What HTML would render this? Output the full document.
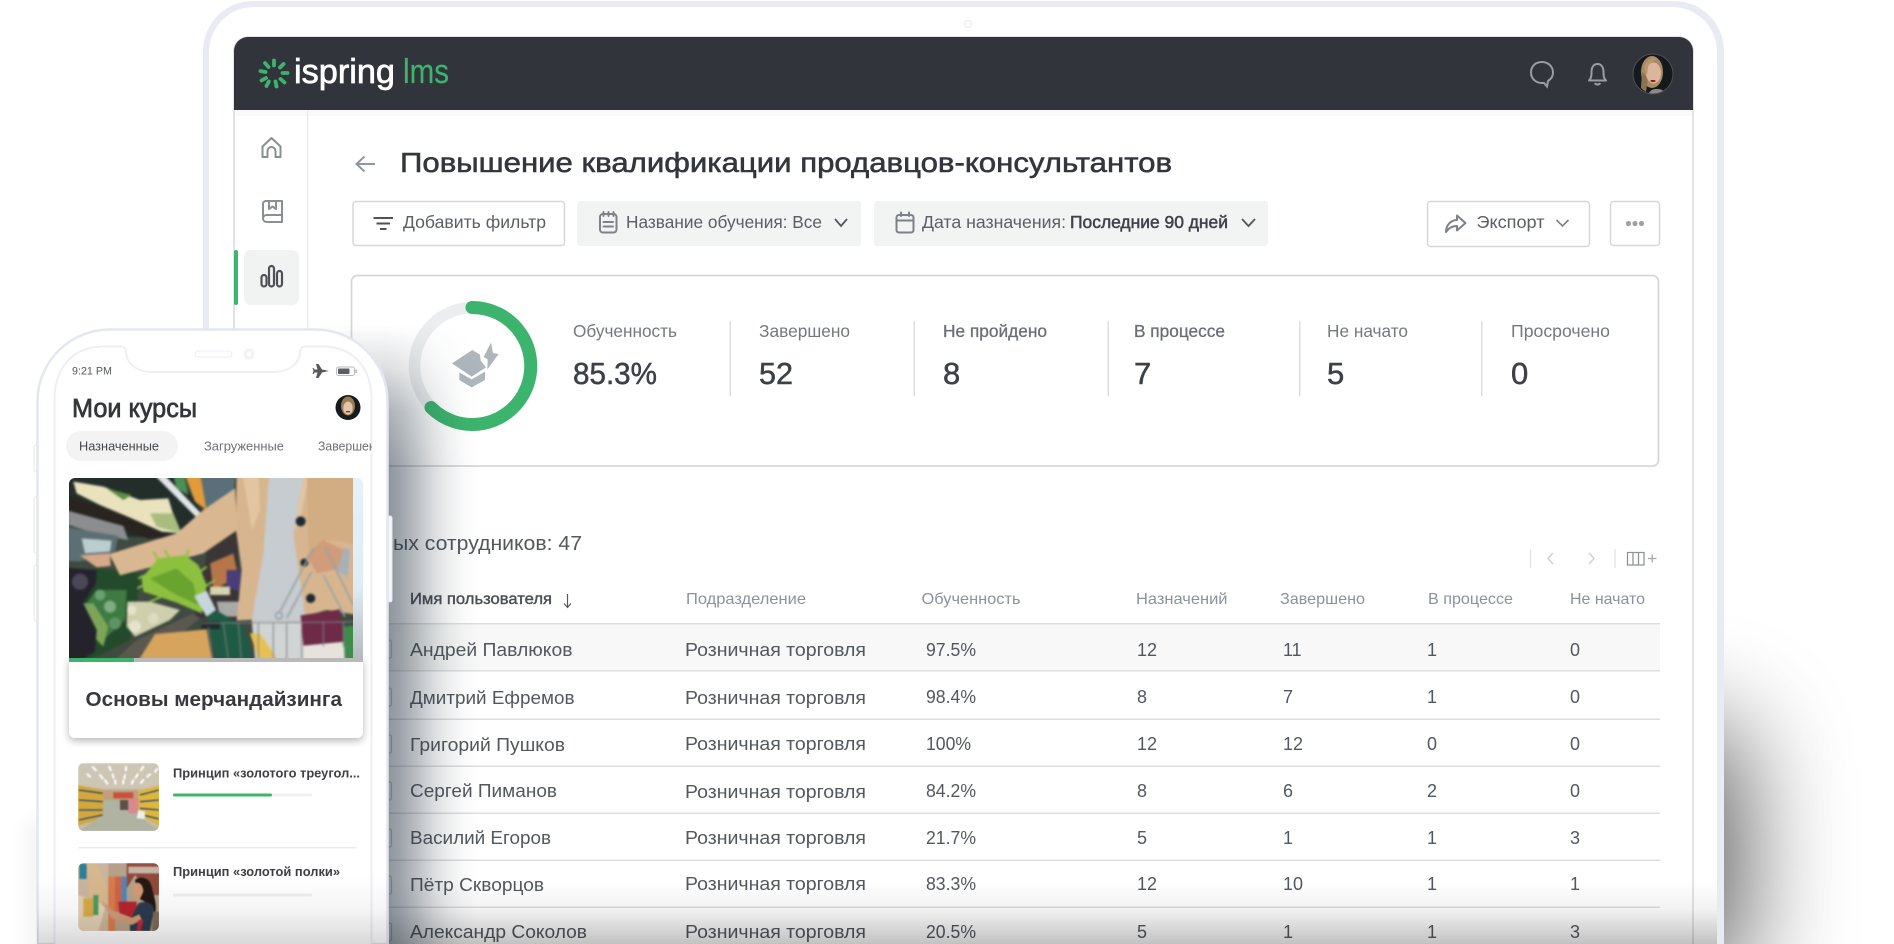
<!DOCTYPE html>
<html lang="ru">
<head>
<meta charset="utf-8">
<title>iSpring LMS</title>
<style>
html,body{margin:0;padding:0;background:#fff;width:1894px;height:944px;overflow:hidden}
svg{display:block}
text{font-family:"Liberation Sans","DejaVu Sans",sans-serif;white-space:pre}
.r{font-size:18px;fill:#53585e}
.h{font-size:16px;fill:#8a939b}
.l{font-size:17.5px;fill:#74797e}
.lm{font-size:17.5px;fill:#6a6f74;stroke:#6a6f74;stroke-width:.3}
.v{font-size:31px;fill:#3c4148;stroke:#3c4148;stroke-width:.5}
.f{font-size:17.5px;fill:#5a5f64}
.ic{fill:none;stroke:#7d8288;stroke-width:2;stroke-linecap:round;stroke-linejoin:round}
</style>
</head>
<body>
<svg xmlns="http://www.w3.org/2000/svg" width="1894" height="944" viewBox="0 0 1894 944">
<defs>
<filter id="shR" filterUnits="userSpaceOnUse" x="1300" y="400" width="594" height="800" color-interpolation-filters="sRGB"><feOffset in="SourceGraphic" dy="36" result="o"/><feMerge result="m"><feMergeNode in="SourceGraphic"/><feMergeNode in="o"/></feMerge><feGaussianBlur in="m" stdDeviation="55"/></filter>
<filter id="shL" filterUnits="userSpaceOnUse" x="0" y="700" width="120" height="400" color-interpolation-filters="sRGB"><feOffset in="SourceGraphic" dy="80" result="o"/><feMerge result="m"><feMergeNode in="SourceGraphic"/><feMergeNode in="o"/></feMerge><feGaussianBlur in="m" stdDeviation="9"/></filter>
<filter id="card" x="-10%" y="-10%" width="120%" height="125%"><feDropShadow dx="0" dy="3" stdDeviation="4" flood-color="#000" flood-opacity=".28"/></filter>
<filter id="soft" filterUnits="userSpaceOnUse" x="-20" y="-20" width="960" height="640" color-interpolation-filters="sRGB"><feGaussianBlur stdDeviation="3.2"/></filter>
<filter id="soft2" x="-5%" y="-5%" width="110%" height="110%" color-interpolation-filters="sRGB"><feGaussianBlur stdDeviation="2"/></filter>
<linearGradient id="botT" x1="0" y1="0" x2="0" y2="1"><stop offset="0" stop-color="#000" stop-opacity="0"/><stop offset=".45" stop-color="#000" stop-opacity=".05"/><stop offset="1" stop-color="#000" stop-opacity=".24"/></linearGradient>
<linearGradient id="botP" x1="0" y1="0" x2="0" y2="1"><stop offset="0" stop-color="#000" stop-opacity="0"/><stop offset=".5" stop-color="#000" stop-opacity=".04"/><stop offset="1" stop-color="#000" stop-opacity=".15"/></linearGradient>
<linearGradient id="strip" x1="0" y1="0" x2="0" y2="1"><stop offset="0" stop-color="#e4f1fb"/><stop offset=".6" stop-color="#e0ecf5"/><stop offset="1" stop-color="#b4babf"/></linearGradient>
<linearGradient id="phH" gradientUnits="userSpaceOnUse" x1="388" y1="0" x2="478" y2="0">
<stop offset="0" stop-color="#1c2b38" stop-opacity=".5"/>
<stop offset=".15" stop-color="#1c2b38" stop-opacity=".42"/>
<stop offset=".32" stop-color="#1c2b38" stop-opacity=".3"/>
<stop offset=".5" stop-color="#1c2b38" stop-opacity=".17"/>
<stop offset=".67" stop-color="#1c2b38" stop-opacity=".08"/>
<stop offset=".84" stop-color="#1c2b38" stop-opacity=".025"/>
<stop offset="1" stop-color="#1c2b38" stop-opacity="0"/>
</linearGradient>
<linearGradient id="phV" gradientUnits="userSpaceOnUse" x1="0" y1="325" x2="0" y2="470">
<stop offset="0" stop-color="#fff" stop-opacity="0"/>
<stop offset=".3" stop-color="#fff" stop-opacity=".3"/>
<stop offset=".6" stop-color="#fff" stop-opacity=".72"/>
<stop offset="1" stop-color="#fff" stop-opacity="1"/>
</linearGradient>
<mask id="phM" maskUnits="userSpaceOnUse" x="320" y="320" width="170" height="624"><rect x="320" y="320" width="170" height="624" fill="url(#phV)"/></mask>
<clipPath id="pc"><path d="M69 658V484a6 6 0 0 1 6-6H357a6 6 0 0 1 6 6V658Z"/></clipPath>
<clipPath id="t1"><rect x="78" y="763" width="81" height="68" rx="6"/></clipPath>
<clipPath id="t2"><rect x="78" y="863" width="81" height="68" rx="6"/></clipPath>
<clipPath id="scr"><rect x="54" y="340" width="318" height="604"/></clipPath>
<clipPath id="av1"><circle cx="1653" cy="74" r="20"/></clipPath>
<clipPath id="av2"><circle cx="348" cy="407.500" r="12.500"/></clipPath>
</defs>

<!-- right tablet shadow -->
<rect x="1500" y="730" width="240" height="214" fill="#000" opacity=".66" filter="url(#shR)"/>

<!-- tablet -->
<path d="M203 944V51a50 50 0 0 1 50-50H1674a50 50 0 0 1 50 50V944Z" fill="#e9ebf4"/>
<path d="M209 944V52a45 45 0 0 1 45-45H1672a45 45 0 0 1 45 45V944Z" fill="#fff"/>
<circle cx="968" cy="24" r="3.500" fill="#fff" stroke="#eceef4" stroke-width="1.500"/>

<!-- screen -->
<path d="M234 944V51a14 14 0 0 1 14-14H1679a14 14 0 0 1 14 14V944" fill="#fff" stroke="#d9dadd" stroke-width="1.500"/>
<path d="M234 110V51a14 14 0 0 1 14-14H1679a14 14 0 0 1 14 14V110Z" fill="#31343a"/>
<rect x="235" y="110" width="1457" height="6" fill="#f6f6f7" opacity=".7"/>
<rect x="307" y="110" width="1.500" height="834" fill="#eceded"/>

<!-- logo -->
<g stroke="#3cb46e" stroke-width="3.800" stroke-linecap="round" fill="none">
<path d="M274 60.500V65.500M283.500 64L280 67.500M287.500 73H282.500M284.500 82.500L280.500 79M276.500 86.500L275.500 81.500M266.500 86L268.800 81.500M261.500 80.500L266 78M260.500 71L265.500 72M265 63L268.500 67"/>
</g>
<text x="294" y="83" font-size="34" fill="#fff" stroke="#fff" stroke-width=".7" textLength="101" lengthAdjust="spacingAndGlyphs">ispring</text>
<text x="403" y="83" font-size="34" fill="#3cb46e" stroke="#3cb46e" stroke-width=".2" textLength="46" lengthAdjust="spacingAndGlyphs">lms</text>

<!-- header icons -->
<path d="M1542 62c-7 0-11 4.700-11 10.500s4.500 10.500 11 10.500c1 0 1.500 0 2 0l3 3.500 1-5.500c3.200-2 5-5 5-8.500 0-5.800-4.500-10.500-11-10.500Z" fill="none" stroke="#9a9da1" stroke-width="2"/>
<path d="M1589 80.500c2-2 2.500-4 2.500-8.500 0-4.500 2-8 6-8s6 3.500 6 8c0 4.500.5 6.500 2.500 8.500ZM1595 83c.5 2 4.500 2 5 0" fill="none" stroke="#9a9da1" stroke-width="2" stroke-linejoin="round"/>
<g clip-path="url(#av1)">
<rect x="1630" y="50" width="46" height="48" fill="#14191c"/>
<ellipse cx="1652" cy="72" rx="11" ry="16" fill="#a88a64"/>
<path d="M1642 72l-1 16 5 4 2-14Z" fill="#8d7350"/>
<ellipse cx="1653.500" cy="73" rx="7.500" ry="10.500" fill="#dbb69c"/>
<path d="M1648 96c1-5 4-7 8-7s8 0 11 7Z" fill="#8f897f"/>
<rect x="1650.500" y="80" width="5" height="2" rx="1" fill="#8c1f2a"/>
<path d="M1644 68c2-8 8-11 13-9-4 1-7 4-9 8l-1 8Z" fill="#b9976e"/>
</g>
<circle cx="1653" cy="74" r="20" fill="none" stroke="#4c4f53" stroke-width="1"/>

<!-- sidebar -->
<path d="M262.500 157V146.500L271.500 138L280.500 146.500V157H275.500V151a4 4 0 0 0-8 0V157Z" fill="none" stroke="#8a8f94" stroke-width="2" stroke-linejoin="round"/>
<path d="M263 218V204a3 3 0 0 1 3-3H282V222H266.500a3.500 3.500 0 0 1-3.500-3.500a3.500 3.500 0 0 1 3.500-3.500H282M269 201.500V209l3.500-2.500 3.500 2.500V201.500" fill="none" stroke="#8a8f94" stroke-width="2" stroke-linejoin="round"/>
<rect x="244" y="250" width="55" height="55" rx="7" fill="#f1f2f2"/>
<rect x="234" y="250" width="4" height="55" rx="2" fill="#3cb46e"/>
<g fill="none" stroke="#4e5258" stroke-width="2.200">
<rect x="261.500" y="275" width="5" height="11.500" rx="2.500"/><rect x="269" y="266" width="5" height="20.500" rx="2.500"/><rect x="277" y="271" width="5" height="15.500" rx="2.500"/>
</g>

<!-- title -->
<path d="M375 164H356.500M364.500 156.500L356.500 164L364.500 171.500" fill="none" stroke="#8f979e" stroke-width="2"/>
<text x="400" y="172" font-size="28" fill="#33373d" stroke="#33373d" stroke-width=".55" textLength="772" lengthAdjust="spacingAndGlyphs">Повышение квалификации продавцов-консультантов</text>

<!-- filters -->
<rect x="353" y="201.500" width="211.500" height="44" rx="3" fill="#fff" stroke="#d5d7da" stroke-width="1.500"/>
<path d="M373.500 218H393M376.500 223.500H390M380 229H386.500" stroke="#4e5258" stroke-width="2" fill="none"/>
<text x="403" y="228" class="f" textLength="143" lengthAdjust="spacingAndGlyphs">Добавить фильтр</text>

<rect x="577" y="201" width="284" height="45" rx="3" fill="#f2f3f3"/>
<g class="ic"><rect x="600" y="214" width="16.500" height="18.500" rx="3"/><path d="M603.500 212V216M608.500 212V216M613.500 212V216M603.500 222H613M603.500 226.500H613"/></g>
<text x="626" y="228" class="f" textLength="196" lengthAdjust="spacingAndGlyphs">Название обучения: Все</text>
<path d="M835 219L841 226L847 219" fill="none" stroke="#53585e" stroke-width="1.800"/>

<rect x="874" y="201" width="394" height="45" rx="3" fill="#f2f3f3"/>
<g class="ic"><rect x="896.500" y="215" width="17" height="17.500" rx="2.500"/><path d="M896.500 220.500H913.500M901 212.500V216M909 212.500V216"/></g>
<text x="922" y="228" class="f" textLength="144" lengthAdjust="spacingAndGlyphs">Дата назначения:</text>
<text x="1070" y="228" font-size="17.500" fill="#3e4248" stroke="#3e4248" stroke-width=".5" textLength="158" lengthAdjust="spacingAndGlyphs">Последние 90 дней</text>
<path d="M1242 219L1248.500 226L1255 219" fill="none" stroke="#53585e" stroke-width="1.800"/>

<rect x="1427.500" y="201.500" width="162" height="45" rx="3" fill="#fff" stroke="#d5d7da" stroke-width="1.500"/>
<path d="M1446 232c0-8 6-12 11-12v-4.500l8.500 7.500-8.500 7.500V226c-4 0-8 1.500-11 6Z" fill="none" stroke="#7d8288" stroke-width="2" stroke-linejoin="round"/>
<text x="1476.500" y="228" class="f" textLength="68" lengthAdjust="spacingAndGlyphs">Экспорт</text>
<path d="M1556.500 220L1562.500 226L1568.500 220" fill="none" stroke="#7d8288" stroke-width="1.600"/>
<rect x="1610.500" y="201.500" width="49" height="44" rx="3" fill="#fff" stroke="#d5d7da" stroke-width="1.500"/>
<g fill="#9ea2a6"><circle cx="1628.500" cy="223.500" r="2.600"/><circle cx="1635" cy="223.500" r="2.600"/><circle cx="1641.500" cy="223.500" r="2.600"/></g>

<!-- stats card -->
<rect x="351.500" y="275.500" width="1307" height="190.500" rx="6" fill="#fff" stroke="#d5d7da" stroke-width="1.800"/>
<circle cx="473" cy="366" r="58.500" fill="none" stroke="#ebedee" stroke-width="11.500"/>
<path d="M472 307.500A58.500 58.500 0 1 1 431 407.500" fill="none" stroke="#3cb46e" stroke-width="13" stroke-linecap="round"/>
<g transform="translate(390 280) scale(.3333)" fill="#aeb6bd">
<path d="M186 250L247 210L270 224L272 242L288 262L245 290Z"/>
<path d="M208 277L245 298L285 275V300L245 322L208 300Z"/>
<path d="M303 187L309 219L326 222L292 268L293 238L281 231Z"/>
</g>

<text x="573" y="337" class="l" textLength="104" lengthAdjust="spacingAndGlyphs">Обученность</text>
<text x="573" y="384" class="v" textLength="84" lengthAdjust="spacingAndGlyphs">85.3%</text>
<text x="759" y="337" class="l" textLength="91" lengthAdjust="spacingAndGlyphs">Завершено</text>
<text x="759" y="384" class="v" textLength="34" lengthAdjust="spacingAndGlyphs">52</text>
<text x="943" y="337" class="lm" textLength="104" lengthAdjust="spacingAndGlyphs">Не пройдено</text>
<text x="943" y="384" class="v">8</text>
<text x="1134" y="337" class="lm" textLength="91" lengthAdjust="spacingAndGlyphs">В процессе</text>
<text x="1134" y="384" class="v">7</text>
<text x="1327" y="337" class="l" textLength="81" lengthAdjust="spacingAndGlyphs">Не начато</text>
<text x="1327" y="384" class="v">5</text>
<text x="1511" y="337" class="l" textLength="99" lengthAdjust="spacingAndGlyphs">Просрочено</text>
<text x="1511" y="384" class="v">0</text>
<g fill="#dcdee0"><rect x="729.500" y="321" width="1.500" height="75"/><rect x="913.500" y="321" width="1.500" height="75"/><rect x="1107.500" y="321" width="1.500" height="75"/><rect x="1299" y="321" width="1.500" height="75"/><rect x="1481" y="321" width="1.500" height="75"/></g>

<!-- table top -->
<text x="393" y="550" font-size="20" fill="#53585e" textLength="189" lengthAdjust="spacingAndGlyphs">ых сотрудников: 47</text>
<g fill="none" stroke="#e2e4e6" stroke-width="1.300">
<path d="M1530.500 549V568M1615 549V568"/>
<path d="M1553 553L1548 558.500L1553 564M1589 553L1594 558.500L1589 564" stroke="#c6cacd"/>
<path d="M1627.500 552.500H1644V565H1627.500ZM1633 552.500V565M1638.500 552.500V565" stroke="#8f9499"/>
<path d="M1648 558.500H1656.500M1652.200 554.500V562.500" stroke="#a5a9ad"/>
</g>

<!-- table header -->
<text x="410" y="604" font-size="15.500" fill="#4c5056" stroke="#4c5056" stroke-width=".4" textLength="142" lengthAdjust="spacingAndGlyphs">Имя пользователя</text>
<path d="M567.500 594V607M564 603.500L567.500 607.500L571 603.500" fill="none" stroke="#55595e" stroke-width="1.200"/>
<text x="686" y="604" class="h" textLength="120" lengthAdjust="spacingAndGlyphs">Подразделение</text>
<text x="921.500" y="604" class="h" textLength="99" lengthAdjust="spacingAndGlyphs">Обученность</text>
<text x="1136" y="604" class="h" textLength="91.500" lengthAdjust="spacingAndGlyphs">Назначений</text>
<text x="1280" y="604" class="h" textLength="85" lengthAdjust="spacingAndGlyphs">Завершено</text>
<text x="1428" y="604" class="h" textLength="85" lengthAdjust="spacingAndGlyphs">В процессе</text>
<text x="1570" y="604" class="h" textLength="75" lengthAdjust="spacingAndGlyphs">Не начато</text>

<!-- rows -->
<rect x="300" y="624" width="1360" height="46.500" fill="#f7f8f7"/>
<g fill="#dcdee0">
<rect x="300" y="623" width="1360" height="1.500"/><rect x="300" y="670" width="1360" height="1.500"/><rect x="300" y="718.500" width="1360" height="1.500"/><rect x="300" y="765.500" width="1360" height="1.500"/><rect x="300" y="812.500" width="1360" height="1.500"/><rect x="300" y="859.500" width="1360" height="1.500"/><rect x="300" y="906.500" width="1360" height="1.500"/>
</g>
<g fill="none" stroke="#c4c9cd" stroke-width="1.200">
<path d="M388 640h1.500a2 2 0 0 1 2 2v14a2 2 0 0 1-2 2H388M388 688h1.500a2 2 0 0 1 2 2v14a2 2 0 0 1-2 2H388M388 735h1.500a2 2 0 0 1 2 2v14a2 2 0 0 1-2 2H388M388 782h1.500a2 2 0 0 1 2 2v14a2 2 0 0 1-2 2H388M388 829h1.500a2 2 0 0 1 2 2v14a2 2 0 0 1-2 2H388M388 876h1.500a2 2 0 0 1 2 2v14a2 2 0 0 1-2 2H388M388 923h1.500a2 2 0 0 1 2 2v14a2 2 0 0 1-2 2H388"/>
</g>

<g class="r">
<text x="410" y="656" textLength="162.500" lengthAdjust="spacingAndGlyphs">Андрей Павлюков</text>
<text x="410" y="704" textLength="164.500" lengthAdjust="spacingAndGlyphs">Дмитрий Ефремов</text>
<text x="410" y="751" textLength="155" lengthAdjust="spacingAndGlyphs">Григорий Пушков</text>
<text x="410" y="797" textLength="147" lengthAdjust="spacingAndGlyphs">Сергей Пиманов</text>
<text x="410" y="844" textLength="141" lengthAdjust="spacingAndGlyphs">Василий Егоров</text>
<text x="410" y="891" textLength="134" lengthAdjust="spacingAndGlyphs">Пётр Скворцов</text>
<text x="410" y="938" textLength="177" lengthAdjust="spacingAndGlyphs">Александр Соколов</text>

<text x="685" y="656" textLength="181" lengthAdjust="spacingAndGlyphs">Розничная торговля</text>
<text x="685" y="704" textLength="181" lengthAdjust="spacingAndGlyphs">Розничная торговля</text>
<text x="685" y="750" textLength="181" lengthAdjust="spacingAndGlyphs">Розничная торговля</text>
<text x="685" y="798" textLength="181" lengthAdjust="spacingAndGlyphs">Розничная торговля</text>
<text x="685" y="844" textLength="181" lengthAdjust="spacingAndGlyphs">Розничная торговля</text>
<text x="685" y="890" textLength="181" lengthAdjust="spacingAndGlyphs">Розничная торговля</text>
<text x="685" y="938" textLength="181" lengthAdjust="spacingAndGlyphs">Розничная торговля</text>

<text x="926" y="656" textLength="50" lengthAdjust="spacingAndGlyphs">97.5%</text>
<text x="926" y="703" textLength="50" lengthAdjust="spacingAndGlyphs">98.4%</text>
<text x="926" y="750" textLength="45" lengthAdjust="spacingAndGlyphs">100%</text>
<text x="926" y="797" textLength="50" lengthAdjust="spacingAndGlyphs">84.2%</text>
<text x="926" y="844" textLength="50" lengthAdjust="spacingAndGlyphs">21.7%</text>
<text x="926" y="890" textLength="50" lengthAdjust="spacingAndGlyphs">83.3%</text>
<text x="926" y="938" textLength="50" lengthAdjust="spacingAndGlyphs">20.5%</text>

<text x="1137" y="656">12</text><text x="1137" y="703">8</text><text x="1137" y="750">12</text><text x="1137" y="797">8</text><text x="1137" y="844">5</text><text x="1137" y="890">12</text><text x="1137" y="938">5</text>
<text x="1283" y="656">11</text><text x="1283" y="703">7</text><text x="1283" y="750">12</text><text x="1283" y="797">6</text><text x="1283" y="844">1</text><text x="1283" y="890">10</text><text x="1283" y="938">1</text>
<text x="1427" y="656">1</text><text x="1427" y="703">1</text><text x="1427" y="750">0</text><text x="1427" y="797">2</text><text x="1427" y="844">1</text><text x="1427" y="890">1</text><text x="1427" y="938">1</text>
<text x="1570" y="656">0</text><text x="1570" y="703">0</text><text x="1570" y="750">0</text><text x="1570" y="797">0</text><text x="1570" y="844">3</text><text x="1570" y="890">1</text><text x="1570" y="938">3</text>
</g>

<!-- tablet bottom fade -->
<rect x="209" y="880" width="1508" height="64" fill="url(#botT)"/>

<!-- phone shadows -->
<rect x="320" y="320" width="158" height="624" fill="url(#phH)" mask="url(#phM)"/>
<rect x="25" y="820" width="40" height="124" fill="#000" opacity=".04" filter="url(#shL)"/>
<rect x="388" y="516" width="4" height="86" rx="2" fill="#f6f7fa" stroke="#e6e8f0"/>

<!-- phone body -->
<rect x="34" y="445" width="5" height="27" rx="2" fill="#fff" stroke="#e7e9f1"/>
<rect x="34" y="497" width="5" height="56" rx="2" fill="#fff" stroke="#e7e9f1"/>
<rect x="34" y="565" width="5" height="56" rx="2" fill="#fff" stroke="#e7e9f1"/>
<path d="M37.500 944V401.500a72 72 0 0 1 72-72H315.500a72 72 0 0 1 72 72V944Z" fill="#fff" stroke="#e4e6f0" stroke-width="2.500"/>
<path d="M54.500 944V400C54.500 368 72 346.500 104 346.500H120c5 0 6 2 6 6 1 12 12 19.500 26 19.500H274c14 0 25-7.500 26-19.500 0-4 1-6 6-6H322C354 346.500 371.500 368 371.500 400V944" fill="#fff" stroke="#eeeff5" stroke-width="2"/>
<rect x="195" y="351" width="37" height="6" rx="3" fill="#fff" stroke="#eef0f5" stroke-width="1.200"/>
<circle cx="249" cy="354" r="5.500" fill="#f2f3f7"/><circle cx="249" cy="354" r="2.300" fill="#fff"/>

<!-- status bar -->
<text x="72" y="374.500" font-size="11" fill="#55585c" textLength="40" lengthAdjust="spacingAndGlyphs">9:21 PM</text>
<path d="M329 371L322 369.500L318.500 364H316L317.500 369.500H314.500L313.500 368H312.500L313.500 371L312.500 374H313.500L314.500 372.500H317.500L316 378H318.500L322 372.500Z" fill="#55585c"/>
<rect x="336.500" y="367" width="18" height="8.500" rx="2" fill="#fff" stroke="#b8babd" stroke-width="1"/>
<rect x="338" y="368.500" width="11.500" height="5.500" rx="1" fill="#5c5f63"/>
<rect x="355.500" y="369.500" width="1.200" height="3.500" fill="#9a9ca0"/>

<text x="72" y="417" font-size="25.500" fill="#33363b" stroke="#33363b" stroke-width=".7" textLength="125" lengthAdjust="spacingAndGlyphs">Мои курсы</text>
<g clip-path="url(#av2)">
<rect x="335" y="395" width="26" height="26" fill="#141a1d"/>
<ellipse cx="348" cy="406" rx="7" ry="9.500" fill="#9a7a55"/>
<ellipse cx="348" cy="408" rx="4.800" ry="6.500" fill="#e3c3aa"/>
<rect x="346" y="411" width="4" height="1.300" fill="#98222e"/>
</g>

<rect x="66" y="431" width="112" height="30" rx="15" fill="#f3f3f3"/>
<g clip-path="url(#scr)" font-size="13">
<text x="79" y="450.500" fill="#44474b" textLength="80" lengthAdjust="spacingAndGlyphs">Назначенные</text>
<text x="204" y="450.500" fill="#6d7075" textLength="80" lengthAdjust="spacingAndGlyphs">Загруженные</text>
<text x="318" y="450.500" fill="#6d7075" textLength="80" lengthAdjust="spacingAndGlyphs">Завершенные</text>
</g>

<!-- card -->
<rect x="69" y="656" width="294" height="82" rx="6" fill="#fff" filter="url(#card)"/>

<!-- grocery photo -->
<g clip-path="url(#pc)">
<rect x="353" y="478" width="10" height="180" fill="url(#strip)"/>
<svg x="69" y="478" width="284" height="180" viewBox="27 24 852 540" preserveAspectRatio="none" overflow="hidden">
<g filter="url(#soft)">
<rect x="-20" y="-20" width="960" height="640" fill="#3f4a40"/>
<path d="M-20 -20H330L430 130L330 205L200 200L-20 110Z" fill="#232d2a"/>
<path d="M40 35L130 50L240 90L325 85L345 150L365 190L305 185L215 145L120 105L50 70Z" fill="#e9e2bd"/>
<path d="M270 130L340 130L365 190L290 170Z" fill="#a9bd7f"/>
<path d="M140 55L215 75L190 90Z" fill="#5d8c45"/>
<path d="M-20 60L200 140L320 200L265 207L180 172L-20 110Z" fill="#2a2420"/>
<path d="M-20 110L190 168L205 210L120 195L-20 150Z" fill="#8b8d8e"/>
<path d="M-20 165L175 198L165 245L60 275L-20 270Z" fill="#5c6f72"/>
<path d="M65 205L155 212L150 245L75 250Z" fill="#bccdd0"/>
<path d="M248 -20H280L425 132L410 143Z" fill="#dfe4e6"/>
<path d="M330 -20H365L385 75L350 55Z" fill="#4c9055"/>
<path d="M362 -20H415L440 120L405 95Z" fill="#e19b3a"/>
<path d="M415 -20H530L520 70L440 120Z" fill="#5a6f7a"/>
<path d="M430 130L530 120L540 450L400 445L440 260Z" fill="#3a3635"/>
<path d="M450 280L520 250L535 320L460 360Z" fill="#b6764a"/>
<path d="M500 300L540 300L538 365L500 350Z" fill="#4a3d78"/>
<path d="M450 350L510 350L510 375L450 375Z" fill="#d8d4b0"/>
<path d="M470 395L540 395L535 440L480 440Z" fill="#a8aaa6"/>
<path d="M-20 320L110 295L240 310L230 400L210 510L120 555L-20 620Z" fill="#234a2a"/>
<path d="M110 360L200 360L195 450L130 510L70 450L80 400Z" fill="#3f7a43"/>
<circle cx="120" cy="375" r="16" fill="#6aa070"/><circle cx="150" cy="410" r="18" fill="#7fae84"/><circle cx="165" cy="460" r="18" fill="#5d9463"/>
<path d="M55 400L100 400L145 470L130 530L100 500Z" fill="#7ca557"/>
<path d="M-20 290L110 300L108 340L70 400L110 480L105 545L-20 620Z" fill="#24232c"/>
<circle cx="60" cy="335" r="24" fill="#4a4758"/>
<path d="M202 395L270 395L360 420L330 450L225 500L200 470Z" fill="#cfcfae"/>
<circle cx="225" cy="470" r="18" fill="#e6e3cc"/><circle cx="215" cy="420" r="14" fill="#e6e3cc"/><circle cx="280" cy="445" r="16" fill="#dcdcc0"/>
<path d="M110 620L230 510L400 430L420 445L200 620Z" fill="#5c584f"/>
<path d="M205 620L285 492L440 478L465 620Z" fill="#d7a45d"/>
<path d="M530 -20L940 -20V442L800 420L730 440L530 452L545 300L528 180Z" fill="#d7b68f"/>
<path d="M525 55L532 180L430 250L180 316L148 252L350 190L430 120Z" fill="#d9b891"/>
<path d="M540 -20L595 -20L600 120L575 180L560 80Z" fill="#e2c6a2"/>
<path d="M630 -20H738L700 190L737 452H575L610 250Z" fill="#c6ccd0"/>
<path d="M575 452H737V620H590Z" fill="#d1d4d4"/>
<path d="M700 190L737 -20L755 -20L720 150Z" fill="#e1c5a0"/>
<path d="M740 -20H940V230L845 215L790 210L745 250Z" fill="#d2ac82"/>
<circle cx="722" cy="154" r="15" fill="#1e2a33"/>
<circle cx="733" cy="278" r="12" fill="#1e2a33"/>
<circle cx="752" cy="385" r="14" fill="#1e2a33"/>
<path d="M60 256L150 250L152 288L110 292Z" fill="#d6a98a"/>
<path d="M740 255L790 210L852 240L832 298L770 310Z" fill="#d09c79"/>
<path d="M852 234L870 240L864 322L830 302Z" fill="#a8b0b8"/>
<path d="M245 325L295 265L375 255L415 285L440 345L425 430L350 398L250 365Z" fill="#8dc03f"/>
<g stroke="#8dc03f" stroke-width="6" fill="none"><path d="M290 300L235 325M300 320L232 355M300 280L280 245M340 290L315 240M370 300L385 240M400 320L440 290M420 360L465 330M350 360L270 395"/></g>
<path d="M270 325L350 295L400 340L415 405L340 370Z" fill="#6aa32e"/>
<path d="M402 378L440 362L468 420L440 440Z" fill="#c5d6dc"/>
<path d="M440 440L468 420L550 470L597 620H480Z" fill="#1f5a44"/>
<path d="M570 490L600 490L688 620H612Z" fill="#e6c052"/>
<g stroke="#98a1a7" stroke-width="5" fill="none">
<path d="M760 235L660 425M795 232L880 405M755 305L680 445M790 315L855 440"/>
<circle cx="657" cy="437" r="10"/>
</g>
<path d="M722 436L840 418L852 515L730 527Z" fill="#6e2a46"/>
<path d="M730 527L855 515L858 620H735Z" fill="#e7e3dc"/>
<path d="M850 470L940 460V620H856Z" fill="#3f8b4b"/>
<rect x="424" y="455" width="56" height="22" fill="#24282a"/>
<g stroke="#7d8286" stroke-width="3" fill="none">
<path d="M425 460L940 455"/>
<path d="M445 470L465 620M490 460L512 620M535 460L548 620M595 460V620M640 460V620M680 460V620M725 455V620M790 455V530M850 455V530"/>
</g>
</g>
</svg>
</g>
<rect x="69" y="658" width="294" height="4" fill="#b9b9b9"/>
<rect x="69" y="658" width="65" height="4" fill="#3cb46e"/>
<text x="85.500" y="706" font-size="20" font-weight="700" fill="#38393d" textLength="256.500" lengthAdjust="spacingAndGlyphs">Основы мерчандайзинга</text>

<!-- list item 1 -->
<g clip-path="url(#t1)">
<g transform="translate(70 755) scale(.3333)" filter="url(#soft2)">
<rect x="24" y="24" width="245" height="205" fill="#c4bda9"/>
<path d="M24 24H269V100H24Z" fill="#cdc6b4"/>
<g stroke="#fff" stroke-width="6" fill="none" stroke-linecap="round"><path d="M68 36L78 46M118 35L122 46M168 35V47M220 35L213 46M262 42L255 50M52 58L60 65M90 60L98 70M128 58L130 68M165 60L163 70M203 58L197 68M240 58L232 65M105 76L112 86M135 76L137 86M160 76V86M190 76L185 86M220 75L213 84"/></g>
<path d="M24 90L100 105V190L24 212Z" fill="#d5a63a"/>
<path d="M269 90L205 108V180L269 212Z" fill="#e0b53a"/>
<g stroke="#234c84" stroke-width="4" fill="none"><path d="M26 105L98 115M26 135L98 140M26 165L98 165M26 195L98 180M267 105L210 120M267 135L210 140M267 165L210 160M267 192L210 178"/></g>
<path d="M100 105H205V135H100Z" fill="#bfa07a"/>
<path d="M130 112H190V130H130Z" fill="#c9503e"/>
<path d="M100 135H205V180L269 229H24L100 180Z" fill="#b0b3a2"/>
<path d="M150 135H175V165H150Z" fill="#5b5247"/>
<path d="M175 130H205V175H175Z" fill="#d98a8f"/>
<path d="M205 165L225 170L225 192L200 190Z" fill="#eeeeea"/>
</g>
</g>
<text x="173" y="777.500" font-size="13" font-weight="700" fill="#3e3f42" textLength="187" lengthAdjust="spacingAndGlyphs">Принцип «золотого треугол...</text>
<rect x="173" y="793.500" width="139" height="3" rx="1.500" fill="#f0f1f1"/>
<rect x="173" y="793.500" width="99" height="3" rx="1.500" fill="#3cb46e"/>
<rect x="78" y="847" width="279" height="1.500" fill="#ececef"/>

<!-- list item 2 -->
<g clip-path="url(#t2)">
<g transform="translate(70 755) scale(.3333)" filter="url(#soft2)">
<rect x="24" y="324" width="245" height="205" fill="#b5a18a"/>
<path d="M24 324H115V529H24Z" fill="#c9b59c"/>
<path d="M28 326H50V372H28Z" fill="#2d7f96"/>
<path d="M50 326H80L110 400V460H60Z" fill="#d7b78e"/>
<path d="M24 420L85 440L105 460L85 529H24Z" fill="#e0cfb4"/>
<path d="M40 430H70V485H40Z" fill="#d8a948"/>
<path d="M70 420H85V480H70Z" fill="#4d9a5f"/>
<path d="M115 365H135V529H115Z" fill="#db7a4a"/>
<path d="M135 365H165V450L145 470H135Z" fill="#c9664b"/>
<path d="M155 365H170V440H155Z" fill="#4f86b8"/>
<path d="M170 324H269V420L245 420L195 360L170 400Z" fill="#8f4a3b"/>
<path d="M175 335L269 335V355H175Z" fill="#c7b4a5"/>
<path d="M145 440H200V495H150Z" fill="#b5252e"/>
<path d="M195 375C215 360 240 370 245 395C252 425 262 450 256 475L235 445L205 430Z" fill="#251714"/>
<path d="M190 390C200 375 220 385 220 410L208 436L190 425Z" fill="#d39a78"/>
<path d="M205 445C230 435 250 445 252 465L240 529H180L180 495Z" fill="#2c3b4e"/>
<path d="M110 450L125 465L185 488L208 478L215 495L185 510L125 490L95 440Z" fill="#cf9a78"/>
<path d="M205 495H220L212 529H200Z" fill="#c42830"/>
<path d="M250 470L269 470V529H245Z" fill="#7d6a58"/>
</g>
</g>
<text x="173" y="876" font-size="13" font-weight="700" fill="#3e3f42" textLength="167" lengthAdjust="spacingAndGlyphs">Принцип «золотой полки»</text>
<rect x="173" y="893.500" width="139" height="3" rx="1.500" fill="#eeefef"/>

<!-- phone bottom fade -->
<rect x="37" y="875" width="351" height="69" fill="url(#botP)"/>
</svg>
</body>
</html>
